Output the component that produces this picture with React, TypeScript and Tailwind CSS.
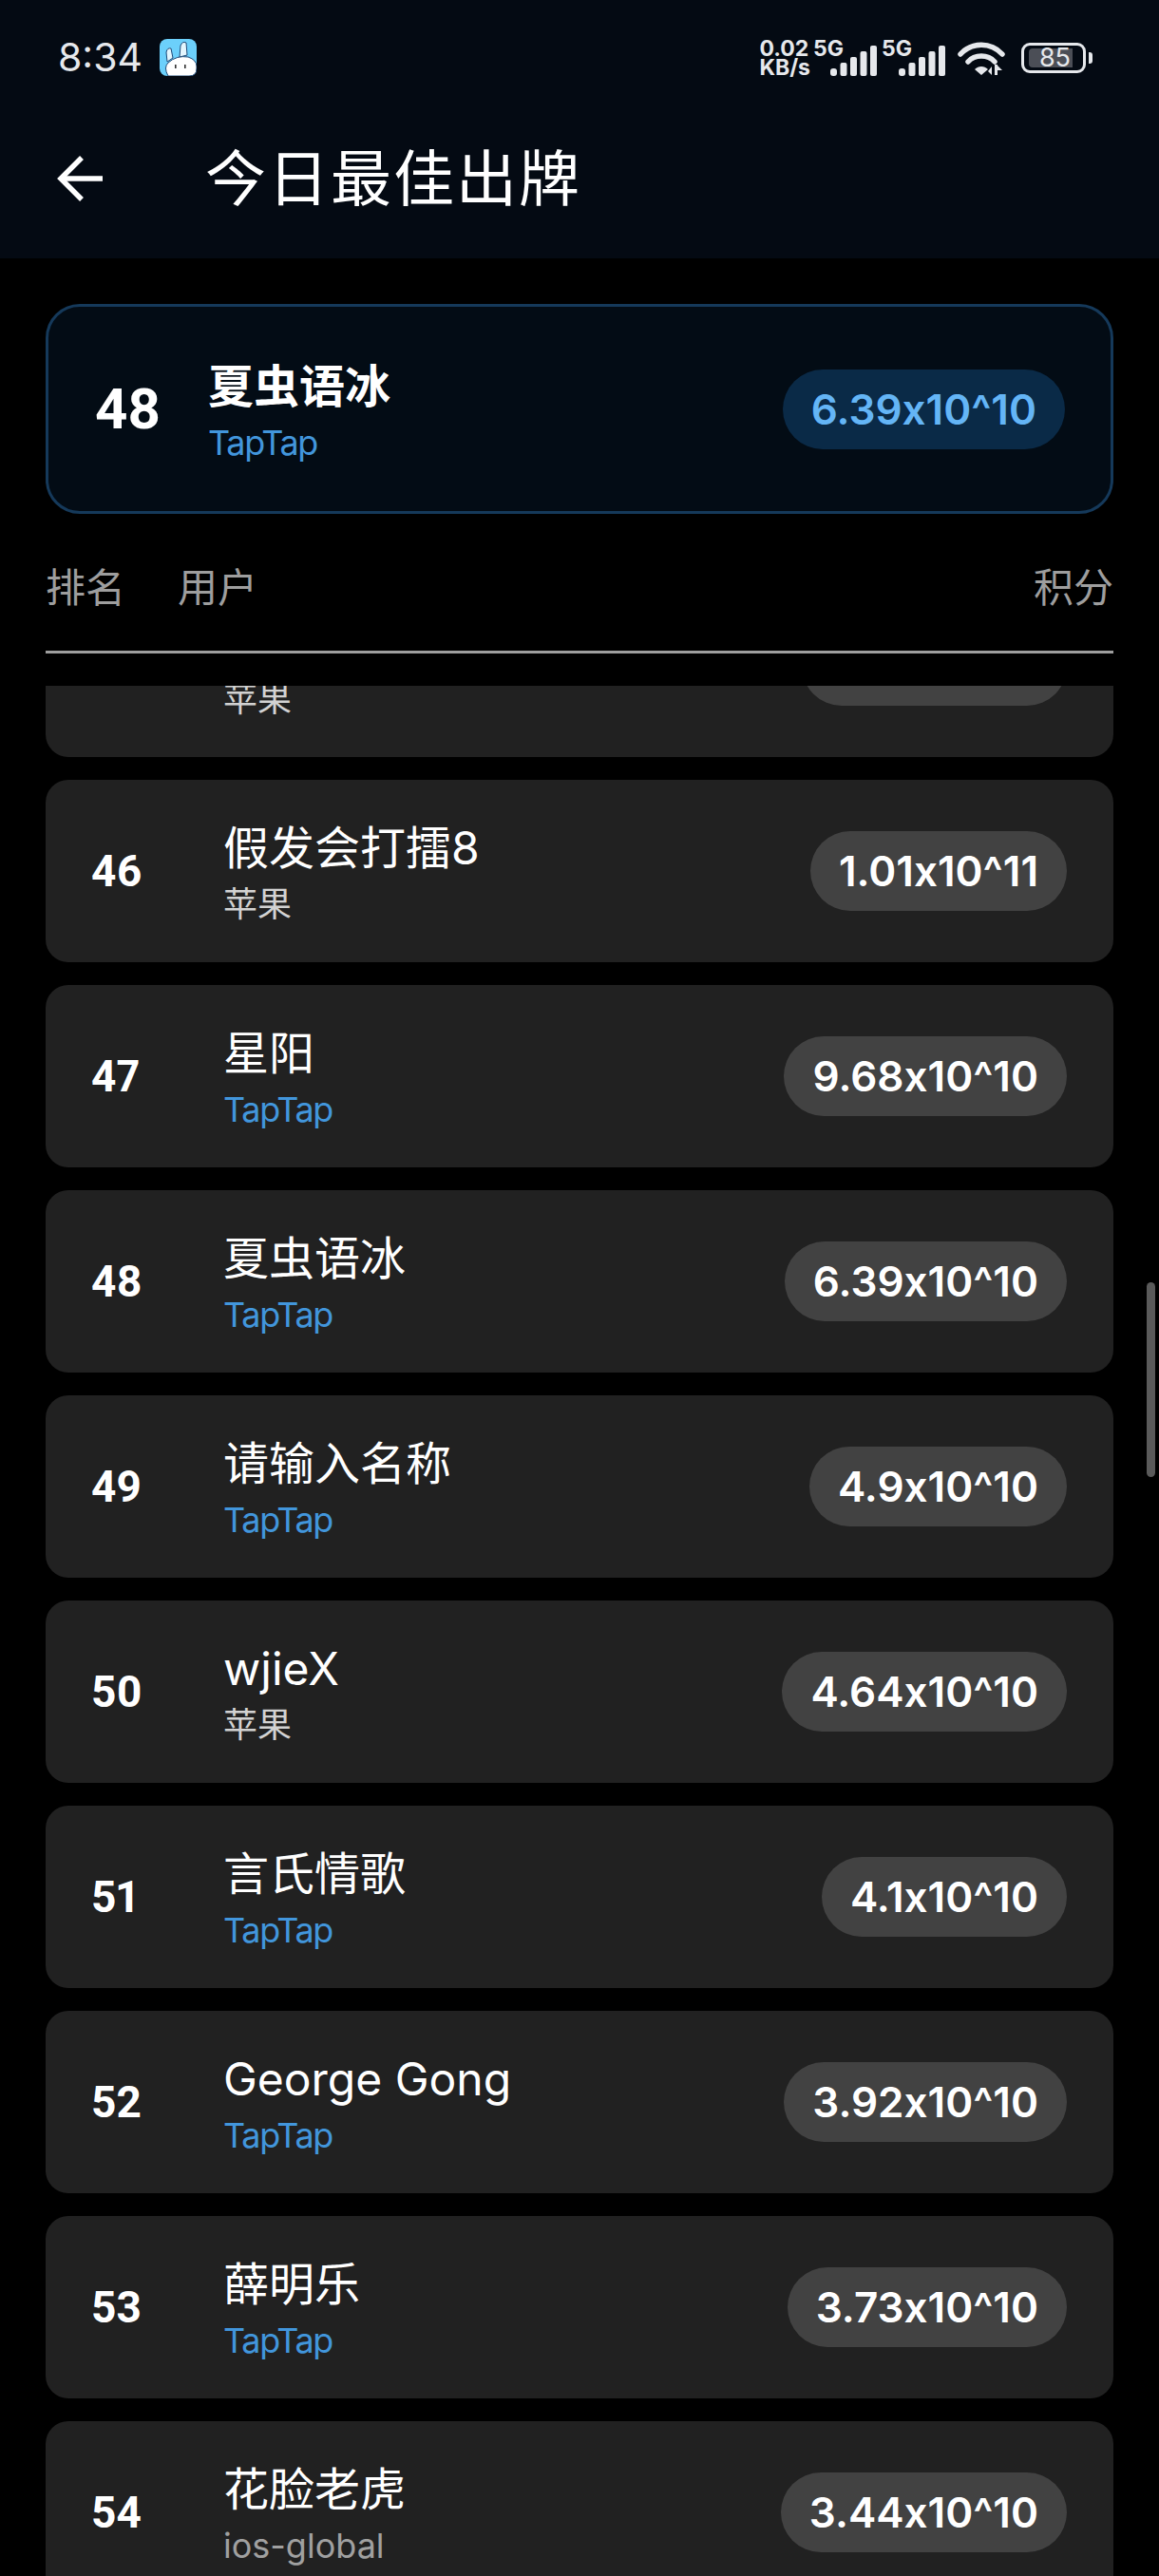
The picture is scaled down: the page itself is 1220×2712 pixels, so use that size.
import React from "react";

const FONT = "font-['Inter','Noto_Sans_CJK_SC',sans-serif]";
const NUM = "font-['Roboto','Noto_Sans_CJK_SC',sans-serif]";

type Row = { rank: number; name: string; src: string; score: string };

const rows: Row[] = [
  { rank: 45, name: "苹果用户", src: "苹果", score: "1.02x10^11" },
  { rank: 46, name: "假发会打擂8", src: "苹果", score: "1.01x10^11" },
  { rank: 47, name: "星阳", src: "TapTap", score: "9.68x10^10" },
  { rank: 48, name: "夏虫语冰", src: "TapTap", score: "6.39x10^10" },
  { rank: 49, name: "请输入名称", src: "TapTap", score: "4.9x10^10" },
  { rank: 50, name: "wjieX", src: "苹果", score: "4.64x10^10" },
  { rank: 51, name: "言氏情歌", src: "TapTap", score: "4.1x10^10" },
  { rank: 52, name: "George Gong", src: "TapTap", score: "3.92x10^10" },
  { rank: 53, name: "薛明乐", src: "TapTap", score: "3.73x10^10" },
  { rank: 54, name: "花脸老虎", src: "ios-global", score: "3.44x10^10" },
];

function srcColor(src: string) {
  if (src === "TapTap") return "text-[#4296dc] tracking-[-1.3px]";
  if (src === "苹果") return "text-[#d2d2d2]";
  return "text-[#a0a0a0]";
}

function Signal() {
  return (
    <div className="relative h-[38px] w-[65px]">
      <span className="absolute left-[-2px] top-[-2px] text-[23px] font-bold leading-[22px] text-[#e6e8ec]">5G</span>
      <svg className="absolute bottom-0 right-0" width="49" height="32" viewBox="0 0 49 32">
        <rect x="0" y="24" width="7" height="8" rx="3" fill="#e6e8ec" />
        <rect x="10.5" y="18" width="7" height="14" rx="2" fill="#e6e8ec" />
        <rect x="21" y="12" width="7" height="20" rx="2" fill="#e6e8ec" />
        <rect x="31.5" y="6" width="7" height="26" rx="2" fill="#e6e8ec" />
        <rect x="42" y="0" width="7" height="32" rx="2" fill="#e6e8ec" />
      </svg>
    </div>
  );
}

function Wifi() {
  return (
    <svg width="50" height="38" viewBox="0 0 50 38" fill="none">
      <path d="M3 15 C15 2 35 2 47 15" stroke="#e6e8ec" strokeWidth="5.5" strokeLinecap="round" />
      <path d="M11 23 C18 15 32 15 39 23" stroke="#e6e8ec" strokeWidth="5.5" strokeLinecap="round" />
      <path d="M18 31 C22 27 28 27 32 31 L25 37 Z" fill="#e6e8ec" />
      <path d="M36 28 L36 37 L32 33 Z" fill="#e6e8ec" />
      <rect x="39" y="26" width="3" height="11" fill="#e6e8ec" />
      <path d="M42 27 L47 32 L42 32 Z" fill="#e6e8ec" />
    </svg>
  );
}

function Battery() {
  return (
    <div className="flex items-center gap-[3px]">
      <div className="flex h-[32px] w-[68px] items-center rounded-[9px] border-[3px] border-[#e6e8ec] pl-[5px]">
        <div className="flex h-[20px] w-[46px] items-center justify-end rounded-l-[4px] bg-[#4b4e56] pr-[2px] text-[27px] font-normal leading-[20px] text-[#e6e8ec]">
          85
        </div>
      </div>
      <div className="h-[12px] w-[4px] rounded-r-[3px] bg-[#e6e8ec]" />
    </div>
  );
}

function Bunny() {
  return (
    <svg width="39" height="39" viewBox="0 0 39 39">
      <rect width="39" height="39" rx="8" fill="#6cd0fb" />
      <path d="M8 24 L7 14 Q8 9 12 10 L14 20 Z" fill="#e4f6fe" stroke="#1f4a78" strokeWidth="1" />
      <path d="M21 19 L22 7 Q24 2 28 4 L29 17 Z" fill="#e4f6fe" stroke="#1f4a78" strokeWidth="1" />
      <path d="M9 39 Q4 30 9 25 Q18 17 30 19 Q39 22 39 29 L39 31 Q39 39 31 39 Z" fill="#fff" stroke="#1f4a78" strokeWidth="1" />
      <rect x="16" y="27" width="1.6" height="4" fill="#333" />
      <rect x="26" y="27" width="1.6" height="4" fill="#333" />
    </svg>
  );
}

function ListRow({ row }: { row: Row }) {
  return (
    <div className="flex h-[192px] shrink-0 items-center rounded-[24px] bg-[#212121] pl-[48px] pr-[49px]">
      <div className={`w-[139px] shrink-0 text-[46px] font-bold text-white proportional-nums ${NUM}`}>{row.rank}</div>
      <div className="flex min-w-0 flex-1 flex-col pt-[5px]">
        <div className="text-[48px] leading-[60px] text-white">{row.name}</div>
        <div className={`mt-[5px] text-[36px] leading-[48px] ${srcColor(row.src)}`}>{row.src}</div>
      </div>
      <div className="flex h-[84px] items-center rounded-[42px] bg-[#424242] px-[30px] text-[44px] font-semibold text-white [font-feature-settings:'calt'_0]">
        {row.score}
      </div>
    </div>
  );
}

export default function App() {
  return (
    <div className={`relative flex h-[2712px] w-[1220px] flex-col overflow-hidden bg-black ${FONT}`}>
      <header className="h-[272px] shrink-0 bg-[#040a13]">
        <div className="flex h-[120px] items-start justify-between pl-[61px] pr-[70px] pt-[41px]">
          <div className="flex items-center gap-[18px]">
            <span className="text-[41px] leading-[39px] text-[#e6e8ec]">8:34</span>
            <Bunny />
          </div>
          <div className="flex items-center">
            <div className="text-[23px] font-bold leading-[20px] text-[#e6e8ec]">
              <div>0.02</div>
              <div>KB/s</div>
            </div>
            <div className="ml-[5px]"><Signal /></div>
            <div className="ml-[7px]"><Signal /></div>
            <div className="ml-[13px]"><Wifi /></div>
            <div className="ml-[17px]"><Battery /></div>
          </div>
        </div>
        <div className="flex h-[130px] items-center pl-[60px] pt-[5px]">
          <svg width="48" height="48" viewBox="0 0 48 48" fill="none" stroke="#fff" strokeWidth="5.5">
            <path d="M48 24 L4 24" />
            <path d="M26 2 L4 24 L26 46" />
          </svg>
          <div className="ml-[108px] text-[64px] leading-[80px] tracking-[2px] text-white">今日最佳出牌</div>
        </div>
      </header>

      <section className="mx-[48px] mt-[48px] flex h-[221px] shrink-0 items-center rounded-[36px] border-[3px] border-[#15395a] bg-[#030c15] pl-[49px] pr-[48px]">
        <div className={`w-[119px] shrink-0 text-[60px] font-bold text-white ${NUM}`}>48</div>
        <div className="flex flex-1 flex-col pt-[5px]">
          <div className="text-[48px] font-bold leading-[60px] text-white">夏虫语冰</div>
          <div className="mt-[5px] text-[36px] leading-[48px] tracking-[-1.3px] text-[#4296dc]">TapTap</div>
        </div>
        <div className="flex h-[84px] items-center rounded-[42px] bg-[#0a2a47] px-[30px] text-[44px] font-semibold text-[#64b5f6] [font-feature-settings:'calt'_0]">
          6.39x10^10
        </div>
      </section>

      <div className="mx-[48px] flex h-[147px] shrink-0 items-start border-b-[3px] border-[#9e9e9e] pt-[48px] text-[42px] leading-[60px] text-[#9e9e9e]">
        <span className="w-[139px]">排名</span>
        <span className="flex-1">用户</span>
        <span>积分</span>
      </div>

      <div className="mx-[48px] mt-[34px] min-h-0 flex-1 overflow-hidden">
        <div className="-mt-[117px] flex flex-col gap-[24px]">
          {rows.map((r) => (
            <ListRow key={r.rank} row={r} />
          ))}
        </div>
      </div>

      <div className="absolute left-[1207px] top-[1350px] h-[205px] w-[9px] rounded-full bg-[#5a5a5a]" />
    </div>
  );
}
